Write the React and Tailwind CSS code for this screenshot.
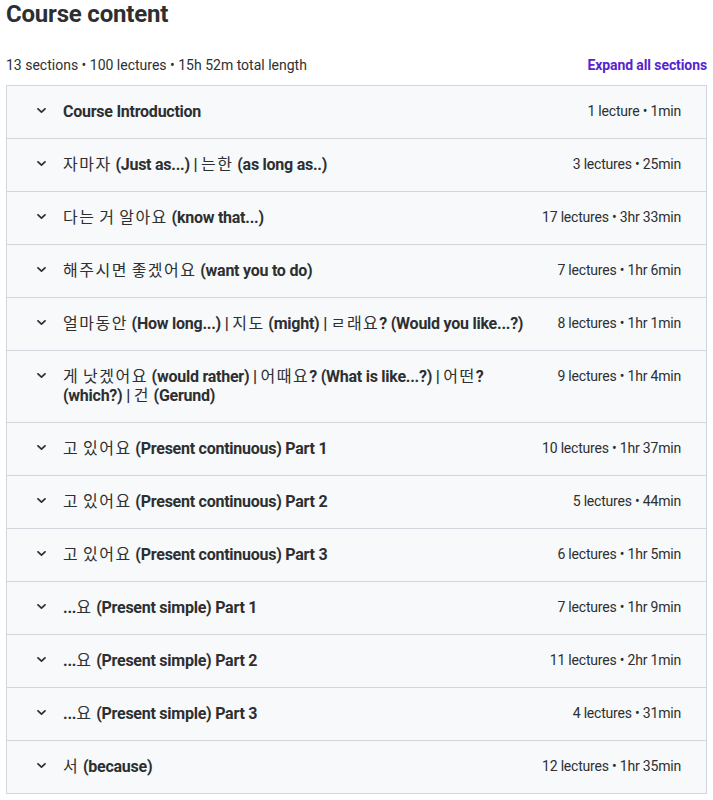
const sections = [
  { title: "Course Introduction", meta: "1 lecture • 1min" },
  { title: "자마자 (Just as...) | 는한 (as long as..)", meta: "3 lectures • 25min" },
  { title: "다는 거 알아요 (know that...)", meta: "17 lectures • 3hr 33min" },
  { title: "해주시면 좋겠어요 (want you to do)", meta: "7 lectures • 1hr 6min" },
  { title: "얼마동안 (How long...) | 지도 (might) | ㄹ래요? (Would you like...?)", meta: "8 lectures • 1hr 1min" },
  { title: "게 낫겠어요 (would rather) | 어때요? (What is like...?) | 어떤? (which?) | 건 (Gerund)", meta: "9 lectures • 1hr 4min" },
  { title: "고 있어요 (Present continuous) Part 1", meta: "10 lectures • 1hr 37min" },
  { title: "고 있어요 (Present continuous) Part 2", meta: "5 lectures • 44min" },
  { title: "고 있어요 (Present continuous) Part 3", meta: "6 lectures • 1hr 5min" },
  { title: "...요 (Present simple) Part 1", meta: "7 lectures • 1hr 9min" },
  { title: "...요 (Present simple) Part 2", meta: "11 lectures • 2hr 1min" },
  { title: "...요 (Present simple) Part 3", meta: "4 lectures • 31min" },
  { title: "서 (because)", meta: "12 lectures • 1hr 35min" },
];

// Hangul renders at regular weight in the original
const renderTitle = (text) =>
  text.split(/([\u3131-\u318e\uac00-\ud7a3]+)/).map((part, i) =>
    /[\u3131-\u318e\uac00-\ud7a3]/.test(part) ? (
      <span key={i} className="font-normal tracking-[1.5px]">{part}</span>
    ) : (
      part
    )
  );

const Chevron = () => (
  <svg width="9" height="5" viewBox="0 0 9 5" className="shrink-0 mt-[6px]">
    <polyline points="1,0.8 4.5,4.2 8,0.8" fill="none" stroke="#2d2f31" strokeWidth="1.7" strokeLinecap="round" strokeLinejoin="round" />
  </svg>
);

export default function App() {
  return (
    <div className="min-h-screen bg-white text-[#2d2f31] font-['Roboto','Noto_Sans_CJK_KR',sans-serif]">
      <h2 className="text-[24px] font-bold leading-[1.2] pl-[6px] tracking-[-0.2px]">Course content</h2>

      <div className="flex items-center justify-between px-[6px] mt-[26px] mb-[10px] text-[14px] leading-[20px]">
        <span>13 sections • 100 lectures • 15h 52m total length</span>
        <button className="font-bold text-[#5624d0] tracking-[-0.1px]">Expand all sections</button>
      </div>

      <div className="mx-[6px] border border-[#d1d7dc]">
        {sections.map((s, i) => (
          <div
            key={i}
            className={`flex items-start bg-[#f7f9fa] pl-[30px] pr-[25px] py-[16.4px] ${i < sections.length - 1 ? "border-b border-[#d1d7dc]" : ""}`}
          >
            <Chevron />
            <div className="flex-1 ml-[17px] text-[16px] font-bold leading-[1.2] tracking-[-0.25px]">
              {renderTitle(s.title)}
            </div>
            <div className="ml-8 text-[14px] leading-[1.2] mt-[1px] whitespace-nowrap tracking-[-0.2px]">{s.meta}</div>
          </div>
        ))}
      </div>
    </div>
  );
}
